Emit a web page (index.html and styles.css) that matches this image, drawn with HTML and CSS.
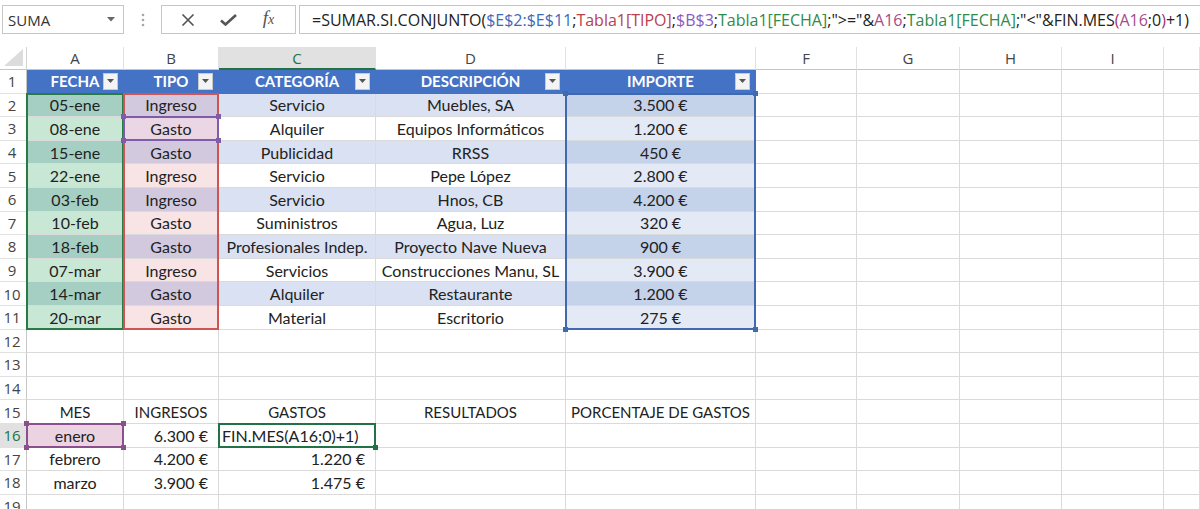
FILE: index.html
```html
<!DOCTYPE html>
<html lang="es">
<head>
  <meta charset="UTF-8">
  <meta name="viewport" content="width=device-width, initial-scale=1.0">
  <title>Control de gastos</title>
  <link rel="stylesheet" href="styles.css">
</head>
<body>
  <div class="formula-bar">
    <div class="name-box">
      <span>SUMA</span>
      <svg class="caret" width="8" height="5" viewBox="0 0 8 5"><path d="M0 0h8L4 4.5z" fill="#666"/></svg>
    </div>
    <div class="grip">
      <svg width="4" height="14" viewBox="0 0 4 14"><circle cx="2" cy="2" r="1.3"/><circle cx="2" cy="7" r="1.3"/><circle cx="2" cy="12" r="1.3"/></svg>
    </div>
    <div class="fx-buttons">
      <svg class="btn" width="14" height="12" viewBox="0 0 14 12"><path d="M1.5 0.5l11 11M12.5 0.5l-11 11" stroke="#555" stroke-width="1.6" fill="none"/></svg>
      <svg class="btn" width="17" height="12" viewBox="0 0 17 12"><path d="M1 6.5l4.5 4L16 1" stroke="#555" stroke-width="2.6" fill="none"/></svg>
      <span class="fx">f<span>x</span></span>
    </div>
    <div class="formula">=SUMAR.SI.CONJUNTO(<span class="ref-e">$E$2:$E$11</span>;<span class="ref-tipo">Tabla1[TIPO]</span>;<span class="ref-b">$B$3</span>;<span class="ref-fecha">Tabla1[FECHA]</span>;"&gt;="&amp;<span class="ref-a">A16</span>;<span class="ref-fecha">Tabla1[FECHA]</span>;"&lt;"&amp;FIN.MES<span class="paren">(</span><span class="ref-a">A16</span>;0<span class="paren">)</span>+1)</div>
  </div>

  <div class="workbook">
    <div class="sheet" id="sheet"></div>
    <div class="sheet overlay" id="overlay"></div>
  </div>

  <script>
    const sheet = document.getElementById('sheet');
    const overlay = document.getElementById('overlay');
    // last column is only the sliver of J that fits in the window
    const letters = ['A', 'B', 'C', 'D', 'E', 'F', 'G', 'H', 'I', ''];

    const headers = ['FECHA', 'TIPO', 'CATEGORÍA', 'DESCRIPCIÓN', 'IMPORTE'];
    const rows = [
      ['05-ene', 'Ingreso', 'Servicio', 'Muebles, SA', '3.500 €'],
      ['08-ene', 'Gasto', 'Alquiler', 'Equipos Informáticos', '1.200 €'],
      ['15-ene', 'Gasto', 'Publicidad', 'RRSS', '450 €'],
      ['22-ene', 'Ingreso', 'Servicio', 'Pepe López', '2.800 €'],
      ['03-feb', 'Ingreso', 'Servicio', 'Hnos, CB', '4.200 €'],
      ['10-feb', 'Gasto', 'Suministros', 'Agua, Luz', '320 €'],
      ['18-feb', 'Gasto', 'Profesionales Indep.', 'Proyecto Nave Nueva', '900 €'],
      ['07-mar', 'Ingreso', 'Servicios', 'Construcciones Manu, SL', '3.900 €'],
      ['14-mar', 'Gasto', 'Alquiler', 'Restaurante', '1.200 €'],
      ['20-mar', 'Gasto', 'Material', 'Escritorio', '275 €']
    ];

    // summary block below the table, keyed by row number
    const summary = {
      15: [['MES', 'caps'], ['INGRESOS', 'caps'], ['GASTOS', 'caps'], ['RESULTADOS', 'caps'], ['PORCENTAJE DE GASTOS', 'caps']],
      16: [['enero', 'sel-pink'], ['6.300 €', 'num'], ['FIN.MES(A16;0)+1)', 'editing']],
      17: [['febrero'], ['4.200 €', 'num'], ['1.220 €', 'num']],
      18: [['marzo'], ['3.900 €', 'num'], ['1.475 €', 'num']]
    };

    function add(parent, cls, html) {
      const el = document.createElement('div');
      el.className = cls;
      if (html) el.innerHTML = html;
      parent.appendChild(el);
      return el;
    }

    // column headers
    add(sheet, 'corner', '<svg width="19" height="17" viewBox="0 0 19 17"><path d="M19 0V17H0z" fill="#dcdcdc"/></svg>');
    letters.forEach(l => add(sheet, 'col-head' + (l === 'C' ? ' active' : ''), l));

    for (let r = 1; r <= 19; r++) {
      add(sheet, 'row-head' + (r === 16 ? ' active' : ''), r);
      letters.forEach((l, i) => {
        const col = 'cell col-' + (l || 'j').toLowerCase();
        if (r === 1 && i < 5) {
          add(sheet, col + ' th', `<span></span><span>${headers[i]}</span><span class="filter"><svg width="7" height="4" viewBox="0 0 7 4"><path d="M0 0h7L3.5 4z" fill="#555"/></svg></span>`);
        } else if (r >= 2 && r <= 11 && i < 5) {
          const band = r % 2 === 0 ? ' band' : ' plain';
          const extra = (r === 3 && i === 1) ? ' picked' : '';
          add(sheet, col + band + extra, rows[r - 2][i]);
        } else if (summary[r] && summary[r][i]) {
          const [text, kind] = summary[r][i];
          add(sheet, col + (kind ? ' ' + kind : ''), text);
        } else {
          add(sheet, col);
        }
      });
    }

    // range outlines drawn over the cells
    const frames = [
      ['frame-fecha', []],
      ['frame-tipo', []],
      ['frame-b3', ['tl', 'tr', 'bl', 'br']],
      ['frame-importe', ['tl', 'tr', 'bl', 'br']],
      ['frame-a16', ['tl', 'tr', 'bl', 'br']],
      ['frame-c16', ['br']]
    ];
    frames.forEach(([cls, handles]) => {
      const f = add(overlay, 'frame ' + cls);
      handles.forEach(p => {
        const h = document.createElement('i');
        h.className = 'handle ' + p;
        f.appendChild(h);
      });
    });
  </script>
</body>
</html>
```

FILE: styles.css
```css
body {
  margin: 0;
  background: #fff;
  font-family: Lato, "Liberation Sans", sans-serif;
  color: #222;
  overflow: hidden;
}

/* formula bar */
.formula-bar {
  display: flex;
  height: 29px;
  padding: 5px 0 0 2px;
}

.name-box {
  width: 122px;
  box-sizing: border-box;
  border: 1px solid #c6c6c6;
  display: flex;
  align-items: center;
  justify-content: space-between;
  padding: 0 8px 0 5px;
  font-family: "Open Sans", sans-serif;
  font-size: 15px;
  color: #333;
}

.grip {
  width: 37px;
  display: flex;
  align-items: center;
  justify-content: center;
  fill: #a6a6a6;
}

.fx-buttons {
  width: 135px;
  box-sizing: border-box;
  border: 1px solid #c6c6c6;
  display: flex;
  align-items: center;
  justify-content: space-around;
  padding: 0 8px 0 6px;
}

.fx {
  font-family: "Liberation Serif", serif;
  font-style: italic;
  font-size: 19px;
  color: #555;
  margin-top: -3px;
}

.fx span {
  font-size: 14px;
}

.formula {
  flex: 1;
  margin-left: 3px;
  border: 1px solid #c6c6c6;
  border-right: none;
  display: flex;
  align-items: center;
  padding-left: 12px;
  font-family: "Open Sans", sans-serif;
  font-size: 16px;
  color: #222;
  white-space: nowrap;
  overflow: hidden;
}

.ref-e { color: #3b6bb8; }
.ref-tipo { color: #b8404f; }
.ref-b { color: #8a5bbf; }
.ref-fecha { color: #2e8b4a; }
.ref-a { color: #a54c8a; }
.paren { color: #a0306f; }

/* worksheet: cell grid with the reference outlines stacked on top */
.workbook {
  display: grid;
  margin-top: 13px;
}

.sheet {
  grid-area: 1 / 1;
  display: grid;
  grid-template-columns: 27px 97px 95px 157px 190px 190px 101px 103px 102px 102px 1fr;
  grid-template-rows: 23px repeat(19, 23.6px);
}

.overlay {
  pointer-events: none;
}

.corner {
  display: flex;
  align-items: flex-end;
  justify-content: flex-end;
  padding: 0 3px 3px 0;
  border-right: 1px solid #d4d4d4;
  border-bottom: 1px solid #c6c6c6;
}

.col-head,
.row-head {
  display: flex;
  align-items: center;
  justify-content: center;
  font-family: "Open Sans", sans-serif;
  font-size: 15px;
  color: #444;
  border-right: 1px solid #e1e1e1;
  border-bottom: 1px solid #c6c6c6;
  background: #fff;
}

.row-head {
  padding-right: 2px;
  border-bottom-color: #e1e1e1;
  border-right-color: #c6c6c6;
}

.col-head.active,
.row-head.active {
  background: #e1e1e1;
  color: #217346;
}

.col-head.active {
  border-bottom: 2px solid #217346;
}

.cell {
  display: flex;
  align-items: center;
  justify-content: center;
  min-width: 0;
  font-size: 16px;
  color: #222;
  white-space: nowrap;
  border-right: 1px solid #dadada;
  border-bottom: 1px solid #dadada;
}

.cell.caps {
  font-size: 15px;
}

.cell.num {
  justify-content: flex-end;
  padding-right: 10px;
}

.cell.editing {
  justify-content: flex-start;
  padding-left: 3px;
}

/* table header row */
.cell.th {
  display: grid;
  grid-template-columns: 20px 1fr 20px;
  align-items: center;
  background: #4472c4;
  color: #fff;
  font-size: 15px;
  font-weight: bold;
  text-align: center;
  border-color: #4472c4;
}

.filter {
  width: 15px;
  height: 17px;
  box-sizing: border-box;
  background: #f4f4f4;
  border: 1px solid #c9c9c9;
  display: flex;
  align-items: center;
  justify-content: center;
}

/* banded rows of the table, tinted per referenced column */
.col-a.band { background: #a4cfc2; }
.col-a.plain { background: #c9e7d5; }
.col-b.band { background: #d3c9df; }
.col-b.plain { background: #f8e3e5; }
.col-b.picked { background: #ead6e4; }
.col-c.band,
.col-d.band { background: #d9e1f2; }
.col-e.band { background: #c4d2ea; }
.col-e.plain { background: #e3eaf6; }
.col-a.sel-pink { background: #ebd3e2; }

/* reference outlines */
.frame {
  position: relative;
  margin: -1px 0 0 -1px;
  border: 2px solid;
}

.frame-fecha { grid-column: 2; grid-row: 3 / 13; border-color: #2a7a45; }
.frame-tipo { grid-column: 3; grid-row: 3 / 13; border-color: #cf5555; }
.frame-b3 { grid-column: 3; grid-row: 4; border-color: #7f5ca8; }
.frame-importe { grid-column: 6; grid-row: 3 / 13; border-color: #4169ad; }
.frame-a16 { grid-column: 2; grid-row: 17; border-color: #8c4f8e; }
.frame-c16 { grid-column: 4; grid-row: 17; border-color: #217346; }

.handle {
  position: absolute;
  width: 5px;
  height: 5px;
  background: currentColor;
}

.frame-b3 .handle { color: #7f5ca8; }
.frame-importe .handle { color: #4169ad; }
.frame-a16 .handle { color: #8c4f8e; }
.frame-c16 .handle { color: #217346; }

.handle.tl { top: -4px; left: -4px; }
.handle.tr { top: -4px; right: -4px; }
.handle.bl { bottom: -4px; left: -4px; }
.handle.br { bottom: -4px; right: -4px; }
```
